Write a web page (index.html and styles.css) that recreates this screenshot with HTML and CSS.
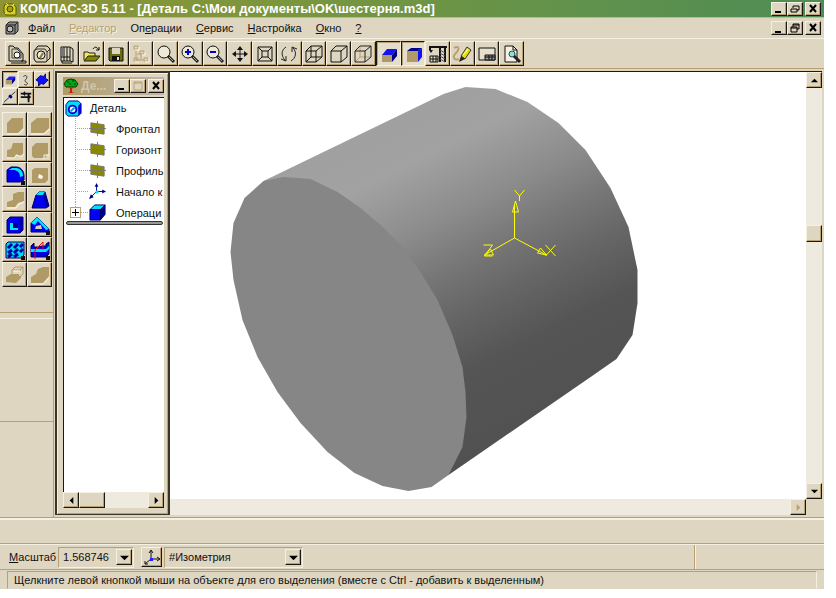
FILE: index.html
```html
<!DOCTYPE html>
<html lang="ru">
<head>
<meta charset="utf-8">
<title>КОМПАС-3D 5.11</title>
<link rel="stylesheet" href="styles.css">
</head>
<body>
<div class="app">
  <header class="titlebar">
    <svg class="ico16" viewBox="0 0 16 16"><path d="M3 3h8l3 3v8H4L2 11V6z" fill="#d8d020" stroke="#5a5a00"/><circle cx="8" cy="8" r="3" fill="#a0a010" stroke="#4a4a00"/><path d="M4 2l2 2M12 3l-2 2M3 13l2-2" stroke="#eeea50"/></svg>
    <h1>КОМПАС-3D 5.11 - [Деталь C:\Мои документы\OK\шестерня.m3d]</h1>
    <div class="winbtns">
      <button class="wb" aria-label="Свернуть"><svg viewBox="0 0 12 10"><path d="M2 8h6" stroke="#000" stroke-width="2"/></svg></button>
      <button class="wb" aria-label="Восстановить"><svg viewBox="0 0 12 10"><path d="M4 4V2h6v4H8M2 5h6v3H2z" fill="none" stroke="#000"/></svg></button>
      <button class="wb gap" aria-label="Закрыть"><svg viewBox="0 0 12 10"><path d="M3 1l6 7M9 1L3 8" stroke="#000" stroke-width="2"/></svg></button>
    </div>
  </header>

  <nav class="menubar">
    <svg class="ico16" viewBox="0 0 16 16"><path d="M2 5l3-3h9v9l-3 3H2z" fill="#888" stroke="#222"/><path d="M2 5h9l3-3M11 5v9" stroke="#222" fill="none"/><circle cx="6" cy="9" r="3" fill="#bbb" stroke="#111"/></svg>
    <button class="menu"><u>Ф</u>айл</button>
    <button class="menu off" disabled><u>Р</u>едактор</button>
    <button class="menu">Оп<u>е</u>рации</button>
    <button class="menu"><u>С</u>ервис</button>
    <button class="menu"><u>Н</u>астройка</button>
    <button class="menu"><u>О</u>кно</button>
    <button class="menu"><u>?</u></button>
    <div class="winbtns">
      <button class="wb" aria-label="Свернуть документ"><svg viewBox="0 0 12 10"><path d="M2 9h6" stroke="#000" stroke-width="2"/></svg></button>
      <button class="wb" aria-label="Восстановить документ"><svg viewBox="0 0 12 10"><path d="M4 4V1h6v5H8M4 2h6M2 4h6v5H2zM2 5h6" fill="none" stroke="#000"/></svg></button>
      <button class="wb gap" aria-label="Закрыть документ"><svg viewBox="0 0 12 10"><path d="M3 1l6 7M9 1L3 8" stroke="#000" stroke-width="2"/></svg></button>
    </div>
  </nav>

  <div class="toolbar" role="toolbar">
    <button class="tb" aria-label="Эскиз"><svg viewBox="0 0 20 20"><path d="M2 17V2h4l2 2h3l5 6v7z" fill="#d8ceb0" stroke="#111"/><path d="M5 5v9h9v-5l-4-4z" fill="none" stroke="#444"/><circle cx="10" cy="11" r="3" fill="#fff" stroke="#111"/><path d="M14 17h5v2H4" fill="none" stroke="#111"/></svg></button>
    <button class="tb" aria-label="Деталь"><svg viewBox="0 0 20 20"><path d="M2 7l4-5h9l3 3v9l-4 4H4l-2-3z" fill="#ddd3b4" stroke="#111"/><path d="M2 7l3-2h8l2 3v9M15 8l3-3" fill="none" stroke="#333"/><circle cx="9" cy="11" r="4" fill="#f2ead2" stroke="#111"/><path d="M8 14l3-5" stroke="#8a7748" stroke-width="2"/></svg></button>
    <button class="tb" aria-label="Библиотека"><svg viewBox="0 0 20 20"><path d="M4 3h9v14H4zM7 3v14M10 3v14M13 3l3 2v13l-3-1M4 13h9M5 17v2h10" fill="none" stroke="#111"/><path d="M5 4h2v8H5z" fill="#777"/></svg></button>
    <button class="tb" aria-label="Открыть"><svg viewBox="0 0 20 20"><path d="M2 16V8h4l1 1h6v3" fill="#f0e860" stroke="#222"/><path d="M2 17l4-5h12l-4 5z" fill="#858500" stroke="#222"/><path d="M11 5c2-3 4-2 6 1M17 3v3h-3" fill="none" stroke="#111"/></svg></button>
    <button class="tb" aria-label="Сохранить"><svg viewBox="0 0 20 20"><path d="M3 4h14v13H4l-1-1z" fill="#6b6b10" stroke="#111"/><path d="M6 4h8v6H6z" fill="#ddd5c0"/><path d="M6 12h8v5H6z" fill="#111"/><path d="M11 13h2v3h-2z" fill="#ddd"/></svg></button>
    <button class="tb" disabled aria-label="Дерево"><svg viewBox="0 0 20 20"><path d="M5 5v11h8M6 10h4v6M3 2h4v3H3zM9 7h4v3H9zM3 14h4v3H3zM13 14h4v3h-4z" fill="none" stroke="#b8a070"/><path d="M4 18h4M14 18h4v-4M14 8v3h-3M8 3v3H4" fill="none" stroke="#fff8e8"/></svg></button>
    <button class="tb" aria-label="Масштаб"><svg viewBox="0 0 20 20"><circle cx="8" cy="8" r="6" fill="#efe8d8" stroke="#111"/><path d="M12 12l6 6" stroke="#222" stroke-width="3"/><path d="M13 13l4 4" stroke="#aaa"/></svg></button>
    <button class="tb" aria-label="Увеличить"><svg viewBox="0 0 20 20"><circle cx="8" cy="8" r="6" fill="#efe8d8" stroke="#111"/><path d="M5 8h6M8 5v6" stroke="#00c" stroke-width="2"/><path d="M12 12l6 6" stroke="#222" stroke-width="3"/><path d="M13 13l4 4" stroke="#aaa"/></svg></button>
    <button class="tb" aria-label="Уменьшить"><svg viewBox="0 0 20 20"><circle cx="8" cy="8" r="6" fill="#efe8d8" stroke="#111"/><path d="M5 8h6" stroke="#00c" stroke-width="2"/><path d="M12 12l6 6" stroke="#222" stroke-width="3"/><path d="M13 13l4 4" stroke="#aaa"/></svg></button>
    <button class="tb" aria-label="Сдвинуть"><svg viewBox="0 0 20 20"><path d="M10 4v12M4 10h12" stroke="#111"/><path d="M10 2l3 4H7zM10 18l3-4H7zM2 10l4-3v6zM18 10l-4-3v6z" fill="#111"/></svg></button>
    <button class="tb" aria-label="Показать все"><svg viewBox="0 0 20 20"><path d="M3 3h14v14H3zM7 7h6v6H7zM3 3l4 4M17 3l-4 4M3 17l4-4M17 17l-4-4" fill="none" stroke="#111"/></svg></button>
    <button class="tb" aria-label="Повернуть"><svg viewBox="0 0 20 20"><path d="M7 3C2 6 2 12 6 16M12 17c5-3 6-9 2-13M2 15l5 2V12M18 5l-5-2v5" fill="none" stroke="#222"/></svg></button>
    <button class="tb" aria-label="Каркас"><svg viewBox="0 0 20 20"><path d="M2 7h10v11H2zM7 2h11v11H7zM2 7l5-5M12 7l6-5M2 18l5-5M12 18l6-5" fill="none" stroke="#111"/></svg></button>
    <button class="tb" aria-label="Без невидимых линий"><svg viewBox="0 0 20 20"><path d="M2 7h10v11H2zM2 7l5-5h11l-6 5M18 2v11l-6 5" fill="none" stroke="#111"/></svg></button>
    <button class="tb" aria-label="Невидимые линии тонкие"><svg viewBox="0 0 20 20"><path d="M7 3v10h10M7 13l-5 5" fill="none" stroke="#b8a070"/><path d="M2 7h10v11H2zM2 7l5-5h11l-6 5M18 2v11l-6 5" fill="none" stroke="#222"/></svg></button>
    <button class="tb down" aria-pressed="true" aria-label="Полутоновое"><svg viewBox="0 0 20 20"><path d="M4 11l5-6h10l-5 6z" fill="#1414f0"/><path d="M14 11l5-6v7l-5 6z" fill="#000080"/><path d="M4 11h10v7H4z" fill="#b09a66"/></svg></button>
    <button class="tb down" aria-pressed="true" aria-label="Перспектива"><svg viewBox="0 0 20 20"><path d="M4 7l4-3h11l-4 3z" fill="#000090"/><path d="M15 7l4-3v9l-4 5z" fill="#1010ff"/><path d="M4 7h11v11H4z" fill="#b09a66"/></svg></button>
    <button class="tb" aria-label="Измерить"><svg viewBox="0 0 20 20"><path d="M2 6V3h7M12 3v15M17 3v15M9 3h10" fill="none" stroke="#111" stroke-width="2"/><path d="M1 6h4l-2 3z" fill="#111"/><path d="M12 6l5 3M12 9l5 3M12 12l5 3M12 15l5 3" stroke="#555"/><path d="M2 12h8v6H2zM2 15h8M5 12v6M8 12v6" fill="none" stroke="#111"/></svg></button>
    <button class="tb" aria-label="Эскиз карандашом"><svg viewBox="0 0 20 20"><path d="M2 4c5-3 6 1 2 5s-2 8 3 6" fill="none" stroke="#b8a070" stroke-width="2"/><path d="M9 12l6-9 4 3-6 9z" fill="#e8e000" stroke="#333"/><path d="M9 12l4 3-6 3z" fill="#222"/><path d="M11 11l5-6" stroke="#fff"/></svg></button>
    <button class="tb" aria-label="Панель"><svg viewBox="0 0 20 20"><path d="M2 4h16v12H2z" fill="#e8e0cc" stroke="#111"/><path d="M8 11h10v5H8zM12 11v5M15 11v5M8 13h10" fill="#999" stroke="#111"/></svg></button>
    <button class="tb" aria-label="Просмотр"><svg viewBox="0 0 20 20"><path d="M3 2h8l4 4v12H3z" fill="#f6f0e2" stroke="#111"/><path d="M11 2v4h4" fill="none" stroke="#111"/><circle cx="10" cy="10" r="3" fill="#7fe3e8" stroke="#444"/><path d="M12 12l6 6" stroke="#222" stroke-width="3"/></svg></button>
  </div>

  <main class="workspace">
    <aside class="side">
      <div class="modes">
        <button class="mode down" aria-pressed="true" aria-label="Построение детали"><svg viewBox="0 0 16 16"><path d="M3 8l4-4h7l-4 4z" fill="#22f"/><path d="M10 8l4-4v4l-4 5z" fill="#000080"/><path d="M3 8h7v5H3z" fill="#b09a66"/></svg></button>
        <button class="mode" aria-label="Кривые"><svg viewBox="0 0 16 16"><path d="M5 4c4-3 5 1 3 3s-1 3 1 4-1 4-3 2" fill="none" stroke="#222"/></svg></button>
        <button class="mode" aria-label="Поверхности"><svg viewBox="0 0 16 16"><path d="M1 8l5-5 4 1 2-3v5l3 2-5 5-3-1-3 3v-5z" fill="#1010f0" stroke="#000080"/></svg></button>
        <button class="mode" aria-label="Вспомогательная геометрия"><svg viewBox="0 0 16 16"><path d="M1 14L14 2" stroke="#222"/><path d="M7 6l3 3" stroke="#008" stroke-width="3"/></svg></button>
        <button class="mode" aria-label="Измерения"><svg viewBox="0 0 16 16"><path d="M2 4h12M2 8h8M11 4v10" stroke="#111" stroke-width="2"/><path d="M4 4l3-3v6zM14 8l-4-3v6z" fill="#111"/></svg></button>
      </div>
      <div class="tools">
        <button class="tool" disabled aria-label="Выдавливание"><svg viewBox="0 0 20 20"><path d="M2 18V8l5-5h11v10l-5 5z" fill="#b09a66"/><path d="M2 19h12l5-5" stroke="#fff8e8" fill="none"/></svg></button>
        <button class="tool" disabled aria-label="Вращение"><svg viewBox="0 0 20 20"><path d="M1 18V8l6-5h12v10l-5 5z" fill="#b09a66"/><path d="M1 19h13l6-5" stroke="#fff8e8" fill="none"/></svg></button>
        <button class="tool" disabled aria-label="Кинематическая"><svg viewBox="0 0 20 20"><path d="M2 17v-7l4-1 2-6h10v11l-4 2-3-2-2 4z" fill="#b09a66"/><path d="M2 18h7l3-3 4 2 3-3" stroke="#fff8e8" fill="none"/></svg></button>
        <button class="tool" disabled aria-label="По сечениям"><svg viewBox="0 0 20 20"><path d="M2 16V7l4-4h12v11l-3 4H4z" fill="#b09a66"/><path d="M14 19v-4h5" stroke="#fff8e8" fill="none"/></svg></button>
        <button class="tool" aria-label="Скругление"><svg viewBox="0 0 20 20"><path d="M2 17V5l4-3h5c5 0 8 4 8 9v4l-4 2z" fill="#0000f0" stroke="#000060"/><path d="M4 5l3-2h5c4 1 6 4 6 8l-3 1c0-5-3-7-7-7z" fill="#00e8f8"/><path d="M16 16h4v4h-4z" fill="#111"/></svg></button>
        <button class="tool" disabled aria-label="Отверстие"><svg viewBox="0 0 20 20"><path d="M2 18V5l3-2h13v12l-3 3z" fill="#b09a66"/><path d="M9 9l4 2-1 3-4-1z" fill="#fff8e8"/></svg></button>
        <button class="tool" disabled aria-label="Ребро"><svg viewBox="0 0 20 20"><path d="M2 17v-5l6-2V4l5-2h6v9l-6 2-3 4z" fill="#b09a66"/><path d="M2 18h9l3-4 5-2" stroke="#fff8e8" fill="none"/></svg></button>
        <button class="tool" aria-label="Уклон"><svg viewBox="0 0 20 20"><path d="M2 18L6 5l3-3h6l4 14-3 2z" fill="#0000f0" stroke="#000060"/><path d="M6 5l3-3h6l-2 3z" fill="#00e8f8"/><path d="M13 5l2-3 4 14-3 2z" fill="#0000a0"/></svg></button>
        <button class="tool" aria-label="Оболочка"><svg viewBox="0 0 20 20"><path d="M2 18V5l3-3h13v13l-3 3z" fill="#0000f0" stroke="#000060"/><path d="M15 5l3-3v13l-3 3z" fill="#0000a0"/><path d="M5 8h8v7H5z" fill="#000080"/><path d="M5 8h3v5h5v2H5z" fill="#00e8f8"/></svg></button>
        <button class="tool" aria-label="Сечение"><svg viewBox="0 0 20 20"><path d="M1 8l6-6 12 12v3H1z" fill="#0000f0" stroke="#000060"/><path d="M1 8l6-6 12 12-3 1-8-9-3 4z" fill="#00e8f8"/><path d="M6 11l5-1 1 4H5z" fill="#d8d0b0"/><path d="M16 16h4v4h-4z" fill="#111"/></svg></button>
        <button class="tool" aria-label="Массив"><svg viewBox="0 0 20 20"><path d="M1 18V4l2-2h16v13l-3 3z" fill="#00d8f0" stroke="#000060"/><path d="M3 8l4-4M9 8l4-4M15 7l3-3M3 13l4-3M9 13l4-4M15 12l3-3M3 17l4-3M9 17l4-3" stroke="#0000a8" stroke-width="3"/><path d="M16 16h4v4h-4z" fill="#111"/></svg></button>
        <button class="tool" aria-label="Зеркальный массив"><svg viewBox="0 0 20 20"><path d="M1 17V6l3-3v4h4l4-1h4V4l3-2v12l-3 3z" fill="#0000e0" stroke="#000060"/><path d="M1 9h15l3-3v3l-3 3H1z" fill="#00e8f8"/><path d="M5 19V10l8-8v8" fill="none" stroke="#f00020"/><path d="M16 16h4v4h-4z" fill="#111"/></svg></button>
        <button class="tool" disabled aria-label="Деталь-заготовка"><svg viewBox="0 0 20 20"><path d="M1 17v-5l5-3h10v4l-5 5z" fill="#b09a66"/><path d="M7 5h8v7H7zM7 5l3-3h8v7l-3 3M15 5l3-3" fill="none" stroke="#b09a66"/><path d="M8 6h7v5" fill="none" stroke="#fff8e8"/></svg></button>
        <button class="tool" disabled aria-label="Операция"><svg viewBox="0 0 20 20"><path d="M1 18v-6l5-3 2-5 5-2h6v9l-6 7z" fill="#b09a66"/><path d="M1 19h12l6-6" stroke="#fff8e8" fill="none"/></svg></button>
      </div>
      <div class="slot"></div>
    </aside>

    <section class="tree">
      <div class="tree-title">
        <svg class="ico16" viewBox="0 0 16 16"><path d="M1 6l3-4 4-1 4 1 3 4-2 3H3z" fill="#00a818" stroke="#003c00"/><path d="M4 4h2M9 3h2M11 6h2M6 6h2" stroke="#003c00"/><path d="M5 8l3 2 3-2-2 3v3l2 1H5l2-1v-3z" fill="#c02010"/></svg>
        <h2>Де...</h2>
        <div class="winbtns">
          <button class="wb" aria-label="Свернуть дерево"><svg viewBox="0 0 12 10"><path d="M2 8h6" stroke="#000" stroke-width="2"/></svg></button>
          <button class="wb" disabled aria-label="Развернуть дерево"><svg viewBox="0 0 12 10"><path d="M2 1h8v8H2zM2 2h8" fill="none" stroke="#b8a070"/></svg></button>
          <button class="wb gap" aria-label="Закрыть дерево"><svg viewBox="0 0 12 10"><path d="M3 1l6 7M9 1L3 8" stroke="#000" stroke-width="2"/></svg></button>
        </div>
      </div>
      <ul class="nodes">
        <li class="root"><svg class="ico" viewBox="0 0 18 18"><path d="M1 5l3-4h10l3 3v10l-3 3H3l-2-2z" fill="#00e0f8" stroke="#000080"/><path d="M14 6l3-3v11l-3 3z" fill="#0000e0"/><circle cx="8" cy="10" r="4" fill="#fff" stroke="#0000c0" stroke-width="2"/><path d="M6 12l4-4" stroke="#0090ff" stroke-width="2"/></svg>Деталь</li>
        <li><svg class="ico" viewBox="0 0 18 18"><path d="M2 3l14 2v10L2 13z" fill="#8a8a00"/><path d="M9 1v16M0 9h18M2 3l14 2v10L2 13z" stroke="#777" fill="none"/></svg>Фронтал</li>
        <li><svg class="ico" viewBox="0 0 18 18"><path d="M2 3l14 2v10L2 13z" fill="#8a8a00"/><path d="M9 1v16M0 9h18M2 3l14 2v10L2 13z" stroke="#777" fill="none"/></svg>Горизонт</li>
        <li><svg class="ico" viewBox="0 0 18 18"><path d="M2 3l14 2v10L2 13z" fill="#8a8a00"/><path d="M9 1v16M0 9h18M2 3l14 2v10L2 13z" stroke="#777" fill="none"/></svg>Профиль</li>
        <li><svg class="ico" viewBox="0 0 18 18"><path d="M8 9V2M8 9h8M8 9l-6 6" stroke="#000080"/><path d="M8 0l2 4H6zM18 9l-4-2v4zM0 17l2-5 3 3z" fill="#000090"/><path d="M7 8h3v3H7z" fill="#00e0f8"/></svg>Начало к</li>
        <li class="last"><button class="plus" aria-label="Раскрыть"><svg viewBox="0 0 9 9"><path d="M1 4h7v1H1zM4 1h1v7H4z"/></svg></button><svg class="ico" viewBox="0 0 18 18"><path d="M1 6l5-5h11l-5 5z" fill="#00e0f8" stroke="#000060"/><path d="M1 6h11v11H1z" fill="#0000ff" stroke="#000060"/><path d="M12 6l5-5v10l-5 6z" fill="#000090" stroke="#000060"/></svg>Операци</li>
        <li class="endbar"></li>
      </ul>
      <div class="hscroll">
        <button class="sb" aria-label="Влево"><svg viewBox="0 0 10 10"><path d="M7 1v8L3 5z"/></svg></button>
        <div class="thumb-h"></div>
        <button class="sb end" aria-label="Вправо"><svg viewBox="0 0 10 10"><path d="M3 1v8l4-4z"/></svg></button>
      </div>
    </section>

    <section class="view">
      <svg class="scene" viewBox="170 72 635 427" role="img" aria-label="Цилиндр">
        <defs>
          <linearGradient id="side" gradientUnits="userSpaceOnUse" x1="280" y1="172" x2="435" y2="479">
            <stop offset="0" stop-color="#a0a0a0"/><stop offset="0.15" stop-color="#a2a2a2"/><stop offset="0.34" stop-color="#8b8b8b"/><stop offset="0.47" stop-color="#777"/><stop offset="0.6" stop-color="#666"/><stop offset="0.76" stop-color="#555"/><stop offset="1" stop-color="#515151"/>
          </linearGradient>
        </defs>
        <path fill="url(#side)" d="M263 181L443 94 465 87 495 89 527 102 558 123 585 150 610 188 628 227 637 270 637 303 632 335 616 359 593 375 448 475 400 420 300 300z"/>
        <path fill="#868686" d="M244 198L263 181 283 177 310 179 337 192 360 208 380 225 402 247 420 272 437 300 452 335 462 367 465 392 466 417 462 447 448 475 431 487 408 491 382 486 354 473 327 452 300 423 277 392 257 357 242 320 233 280 230 252 233 223z"/>
        <g fill="none" stroke="#ff0">
          <path d="M514 238V204M514 238L546 255M514 238L484 255M515 201l-3 11h6zM546 255l-9-2 3-5zM484 255l9 0-3-6z"/>
          <path d="M514 190l5 6 5-6M519 196v5M545 245l10 11M555 245l-10 11M483 245h9l-8 11h8"/>
        </g>
      </svg>
      <div class="vscroll">
        <button class="sb" aria-label="Вверх"><svg viewBox="0 0 10 10"><path d="M1 7h8L5 3z"/></svg></button>
        <div class="thumb-v"></div>
        <button class="sb bottom" aria-label="Вниз"><svg viewBox="0 0 10 10"><path d="M1 3h8L5 7z"/></svg></button>
      </div>
      <div class="hscroll">
        <button class="sb end" disabled aria-label="Прокрутить вправо"><svg viewBox="0 0 10 10"><path d="M3 1v8l4-4z"/></svg></button>
      </div>
    </section>
  </main>

  <div class="strip"></div>

  <div class="params">
    <label for="scale"><u>М</u>асштаб</label>
    <div class="combo scale"><input id="scale" type="text" value="1.568746"><button class="sb" aria-label="Список масштабов"><svg viewBox="0 0 10 10"><path d="M0 3h10L5 8z"/></svg></button></div>
    <button class="orient" aria-label="Ориентация"><svg viewBox="0 0 18 18"><path d="M8 11V3M8 11h8M8 11l-6 5M6 5l2-3 2 3M14 9l3 2-3 2M2 13v3h3" fill="none" stroke="#111"/><path d="M7 10h3v3H7z" fill="#22f"/></svg></button>
    <div class="combo orientation"><select aria-label="Ориентация вида"><option>#Изометрия</option></select><span class="sb arrow"><svg viewBox="0 0 10 10"><path d="M0 3h10L5 8z"/></svg></span></div>
    <div class="rest"></div>
  </div>

  <footer class="status"><p>Щелкните левой кнопкой мыши на объекте для его выделения (вместе с Ctrl - добавить к выделенным)</p></footer>
</div>
</body>
</html>
```
FILE: styles.css
```css
:root {
  --face: #dfd6c1;
  --light: #f6f0e2;
  --shade: #b8a070;
  --dark: #1c1710;
  --track: #efeae0;
}

* { box-sizing: border-box; }

body {
  margin: 0;
  background: #fff;
  font: 11px/14px "Liberation Sans", Arial, sans-serif;
  color: #111;
}

button, input, select {
  margin: 0;
  padding: 0;
  border: 0;
  border-radius: 0;
  background: var(--face);
  font: inherit;
  color: inherit;
}

h1, h2, p, ul { margin: 0; padding: 0; font: inherit; }
svg { display: block; flex: none; }

.app {
  display: flex;
  flex-direction: column;
  height: 100vh;
  min-height: 480px;
  border-right: 12px solid #fff;
  border-bottom: 9px solid #fff;
  background: var(--face);
}

.ico16 { width: 16px; height: 16px; }

/* raised surfaces */
.wb, .tb, .tool, .mode, .sb, .orient, .thumb-h, .thumb-v {
  display: flex;
  align-items: center;
  justify-content: center;
  background: var(--face);
  border: 1px solid;
  border-color: var(--light) var(--dark) var(--dark) var(--light);
  box-shadow: inset -1px -1px var(--shade);
}

.tb.down, .mode.down {
  border-color: var(--dark) var(--light) var(--light) var(--dark);
  box-shadow: inset 1px 1px var(--shade);
  background: #e6decd;
}

/* title and menu */
.titlebar {
  display: flex;
  align-items: center;
  flex: none;
  height: 18px;
  padding: 0 3px 0 2px;
  background: linear-gradient(90deg, #8f9433, #7a963e 35%, #64934a 65%, #4f8c55);
  border-bottom: 1px solid #b5bc90;
}

.titlebar h1 {
  flex: 1;
  margin-left: 2px;
  font-size: 13px;
  font-weight: bold;
  color: #fff;
  white-space: nowrap;
}

.winbtns { display: flex; margin-left: auto; }
.wb { width: 16px; height: 14px; }
.wb svg { width: 12px; height: 10px; }
.wb.gap { margin-left: 2px; }

.menubar {
  display: flex;
  align-items: center;
  flex: none;
  gap: 14px;
  height: 21px;
  padding: 0 3px 0 4px;
  border-bottom: 1px solid var(--light);
}

.menu { background: none; }
.menubar .menu:first-of-type { margin-left: -6px; }
.off { color: var(--shade); text-shadow: 1px 1px var(--light); }

/* toolbar */
.toolbar {
  display: flex;
  flex: none;
  width: 524px;
  height: 29px;
  padding: 2px 0 2px 5px;
}

.tb { flex: 1; min-width: 0; height: 25px; }
.tb svg, .tool svg { width: 20px; height: 20px; }

/* workspace */
.workspace {
  display: flex;
  flex: 1;
  min-height: 0;
  border-top: 1px solid var(--shade);
  border-bottom: 1px solid var(--shade);
}

.side {
  display: flex;
  flex-direction: column;
  flex: none;
  width: 54px;
  margin-right: 1px;
  padding-top: 2px;
  border-right: 1px solid var(--shade);
}

.modes {
  display: flex;
  flex-wrap: wrap;
  align-content: flex-start;
  height: 36px;
  padding-left: 2px;
  border-bottom: 1px solid var(--light);
}

.mode { width: 16px; height: 17px; }
.mode svg { width: 14px; height: 14px; }

.tools {
  display: grid;
  grid-template-columns: 25px 25px;
  grid-auto-rows: 25px;
  align-content: start;
  height: 206px;
  padding: 5px 0 0 2px;
  border-bottom: 1px solid var(--shade);
}

.slot {
  height: 104px;
  margin-top: 5px;
  border-top: 1px solid var(--light);
  border-bottom: 1px solid var(--shade);
}

.tree {
  display: flex;
  flex-direction: column;
  flex: none;
  width: 115px;
  margin: 2px 0;
  padding: 4px 4px 6px 6px;
  background: var(--face);
  border: 2px solid #3c3424;
  border-bottom-width: 1px;
  box-shadow: inset 1px 1px var(--light), inset -1px -1px var(--shade);
}

.tree-title {
  display: flex;
  align-items: center;
  flex: none;
  height: 18px;
  background: linear-gradient(90deg, #b09a66, #c0b9aa);
}

.tree-title h2 {
  margin-left: 2px;
  font-size: 12px;
  font-weight: bold;
  color: #cfc6b2;
}

.nodes {
  flex: 1;
  margin-top: 2px;
  overflow: hidden;
  list-style: none;
  background: #fff;
  border-left: 1px solid var(--dark);
  border-top: 1px solid var(--dark);
}

.nodes li {
  display: flex;
  align-items: center;
  height: 21px;
  gap: 10px;
  margin-left: 11px;
  padding-left: 14px;
  white-space: nowrap;
  background:
    repeating-linear-gradient(var(--shade) 0 1px, #fff 1px 2px) 0 0 / 1px 100% no-repeat,
    repeating-linear-gradient(90deg, var(--shade) 0 1px, #fff 1px 2px) 0 50% / 13px 1px no-repeat;
}

.nodes .root { height: 20px; margin-left: 0; padding-left: 1px; gap: 8px; background: none; }
.nodes .last { position: relative; background-size: 1px 50%, 13px 1px; }
.ico { width: 17px; height: 17px; }

.plus {
  position: absolute;
  left: -5px;
  top: 5px;
  width: 11px;
  height: 11px;
  border: 1px solid var(--shade);
  background: #fff;
}

.nodes .endbar {
  height: 4px;
  margin: -2px 1px 0 2px;
  padding: 0;
  background: #999;
  border: 1px solid #333;
  border-radius: 2px;
  position: relative;
}

/* scroll bars */
.hscroll, .vscroll { display: flex; flex: none; background: var(--track); }
.hscroll { height: 16px; }
.vscroll { flex-direction: column; }
.sb { flex: none; width: 16px; height: 16px; }
.sb svg { width: 9px; height: 9px; }
.sb:disabled svg { fill: var(--shade); }
.end { margin-left: auto; }
.bottom { margin-top: auto; }
.thumb-h { width: 26px; }
.thumb-v { height: 17px; margin-top: 137px; }

.view {
  display: grid;
  grid-template: minmax(0, 1fr) 16px / minmax(0, 1fr) 16px;
  flex: 1;
  min-width: 0;
  margin: 2px 2px 2px 0;
  border-top: 1px solid var(--dark);
}

.scene { width: 100%; height: 100%; background: #fff; }

/* bottom bars */
.strip {
  flex: none;
  height: 26px;
  border-top: 2px solid var(--light);
  border-bottom: 1px solid var(--shade);
}

.params {
  display: flex;
  align-items: center;
  flex: none;
  height: 26px;
  padding-left: 9px;
  border-top: 1px solid var(--light);
  border-bottom: 1px solid var(--shade);
}

.combo {
  position: relative;
  display: flex;
  align-items: center;
  height: 21px;
  padding: 0 1px 0 4px;
  border: 1px solid;
  border-color: var(--shade) var(--light) var(--light) var(--shade);
}

.combo input, .combo select {
  flex: 1;
  min-width: 0;
  appearance: none;
  outline: 0;
}

.scale { width: 76px; margin-left: 2px; }
.orientation { width: 139px; margin-left: 2px; }
.arrow { pointer-events: none; }
.orient { width: 21px; height: 20px; margin-left: 7px; }
.orient svg { width: 18px; height: 18px; }

.rest {
  align-self: stretch;
  width: 130px;
  margin-left: auto;
  border-left: 1px solid var(--shade);
  box-shadow: inset 1px 0 var(--light);
}

.status { flex: none; height: 19px; padding: 1px 7px 0; }

.status p {
  height: 18px;
  padding-left: 6px;
  line-height: 17px;
  white-space: nowrap;
  overflow: hidden;
  border: 1px solid;
  border-color: var(--shade) var(--light) transparent var(--shade);
}
```
